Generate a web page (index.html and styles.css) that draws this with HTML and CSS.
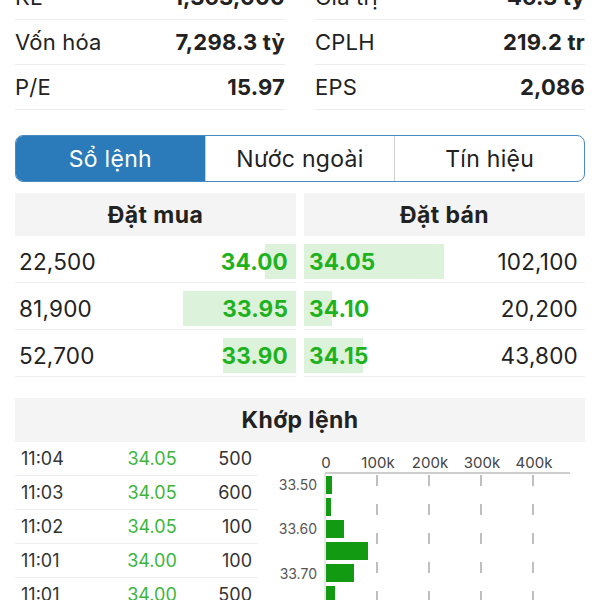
FILE: index.html
```html
<!DOCTYPE html>
<html lang="vi">
<head>
  <meta charset="UTF-8">
  <title>Sổ lệnh</title>
  <link rel="stylesheet" href="styles.css">
</head>
<body>
  <div class="page">
    <div class="stats">
      <div class="stat"><span>KL</span><b>1,363,000</b></div>
      <div class="stat"><span>Giá trị</span><b>46.3 tỷ</b></div>
      <div class="stat"><span>Vốn hóa</span><b>7,298.3 tỷ</b></div>
      <div class="stat"><span>CPLH</span><b>219.2 tr</b></div>
      <div class="stat"><span>P/E</span><b>15.97</b></div>
      <div class="stat"><span>EPS</span><b>2,086</b></div>
    </div>

    <div class="tabs">
      <div class="tab active">Sổ lệnh</div>
      <div class="tab">Nước ngoài</div>
      <div class="tab">Tín hiệu</div>
    </div>

    <div class="book">
      <div class="side buy">
        <div class="side-head">Đặt mua</div>
        <div class="level"><div class="level-bar" style="background-size:31px 100%"><span class="vol">22,500</span><span class="price">34.00</span></div></div>
        <div class="level"><div class="level-bar" style="background-size:113px 100%"><span class="vol">81,900</span><span class="price">33.95</span></div></div>
        <div class="level"><div class="level-bar" style="background-size:73px 100%"><span class="vol">52,700</span><span class="price">33.90</span></div></div>
      </div>
      <div class="side sell">
        <div class="side-head">Đặt bán</div>
        <div class="level"><div class="level-bar" style="background-size:140px 100%"><span class="price">34.05</span><span class="vol">102,100</span></div></div>
        <div class="level"><div class="level-bar" style="background-size:28px 100%"><span class="price">34.10</span><span class="vol">20,200</span></div></div>
        <div class="level"><div class="level-bar" style="background-size:59px 100%"><span class="price">34.15</span><span class="vol">43,800</span></div></div>
      </div>
    </div>

    <div class="match">
      <div class="match-head">Khớp lệnh</div>
      <div class="match-body">
        <div class="trades">
          <div class="trade"><span>11:04</span><span class="t-price">34.05</span><span class="t-vol">500</span></div>
          <div class="trade"><span>11:03</span><span class="t-price">34.05</span><span class="t-vol">600</span></div>
          <div class="trade"><span>11:02</span><span class="t-price">34.05</span><span class="t-vol">100</span></div>
          <div class="trade"><span>11:01</span><span class="t-price">34.00</span><span class="t-vol">100</span></div>
          <div class="trade"><span>11:01</span><span class="t-price">34.00</span><span class="t-vol">500</span></div>
        </div>
        <svg class="chart" width="327" height="170" viewBox="0 0 327 170">
          <g class="ticks">
            <text x="68" y="26">0</text>
            <text x="120" y="26">100k</text>
            <text x="172" y="26">200k</text>
            <text x="224" y="26">300k</text>
            <text x="276" y="26">400k</text>
          </g>
          <line x1="67" y1="31" x2="312" y2="31" stroke="#bdbdbd" stroke-width="1.5"/>
          <line x1="67" y1="31" x2="67" y2="170" stroke="#d0d0d0" stroke-width="1"/>
          <g stroke="#ababab" stroke-width="1.5" stroke-dasharray="11 18">
            <line x1="119" y1="33" x2="119" y2="170"/>
            <line x1="171" y1="33" x2="171" y2="170"/>
            <line x1="223" y1="33" x2="223" y2="170"/>
            <line x1="275" y1="33" x2="275" y2="170"/>
          </g>
          <g fill="#139a13">
            <rect x="68" y="34" width="6" height="18"/>
            <rect x="68" y="56" width="5" height="18"/>
            <rect x="68" y="78" width="18" height="18"/>
            <rect x="68" y="100" width="42" height="18"/>
            <rect x="68" y="122" width="28" height="18"/>
            <rect x="68" y="144" width="9" height="18"/>
          </g>
          <g class="prices">
            <text x="59" y="48">33.50</text>
            <text x="59" y="92">33.60</text>
            <text x="59" y="137">33.70</text>
          </g>
        </svg>
      </div>
    </div>
  </div>
</body>
</html>
```

FILE: styles.css
```css
body{
  margin:0;
  background:#fff;
  font-family: Inter, "Noto Sans", sans-serif;
  color:#222;
  overflow:hidden;
}
.page{
  padding:0 15px;
}

/* top stats */
.stats{
  display:grid;
  grid-template-columns:1fr 1fr;
  column-gap:30px;
  margin-top:-25px;
}
.stat{
  display:flex;
  justify-content:space-between;
  align-items:center;
  height:44px;
  border-bottom:1px solid #ededed;
  font-size:22px;
  letter-spacing:0.2px;
}
.stat b{
  font-weight:700;
}

/* segmented tabs */
.tabs{
  display:flex;
  margin-top:25px;
  height:47px;
  border:1px solid #4a8bc2;
  border-radius:8px;
  overflow:hidden;
  box-sizing:border-box;
}
.tab{
  flex:1;
  display:flex;
  align-items:center;
  justify-content:center;
  font-size:23px;
  letter-spacing:0.3px;
  color:#222;
  border-left:1px solid #cfcfcf;
}
.tab:first-child{
  border-left:none;
}
.tab.active{
  background:#2b7bba;
  color:#fff;
}

/* order book */
.book{
  display:flex;
  gap:8px;
  margin-top:11px;
}
.side{
  flex:1;
}
.side-head{
  height:43px;
  display:flex;
  align-items:center;
  justify-content:center;
  background:#f4f4f4;
  font-size:23px;
  font-weight:700;
  letter-spacing:0.4px;
}
.level{
  padding:8px 0 3px;
  border-bottom:1px solid #efefef;
}
.level-bar{
  display:flex;
  justify-content:space-between;
  align-items:center;
  height:35px;
  font-size:22.5px;
  letter-spacing:0.2px;
  background-image:linear-gradient(#dcf2da,#dcf2da);
  background-repeat:no-repeat;
}
.buy .level-bar{
  background-position:right top;
  padding:0 8px 0 4px;
}
.sell .level-bar{
  background-position:left top;
  padding:0 7px 0 5px;
}
.level .price{
  color:#1fb21f;
  font-weight:700;
}

/* matched trades */
.match{
  margin-top:21px;
}
.match-head{
  height:44px;
  display:flex;
  align-items:center;
  justify-content:center;
  background:#f4f4f4;
  font-size:23px;
  font-weight:700;
  letter-spacing:0.4px;
}
.match-body{
  display:flex;
}
.trades{
  width:243px;
  flex:none;
}
.trade{
  display:grid;
  grid-template-columns:91px 80px 1fr;
  align-items:center;
  height:33px;
  padding:0 6px;
  border-bottom:1px solid #efefef;
  font-size:18px;
  color:#333;
}
.t-price{
  text-align:center;
  color:#3cb53c;
}
.t-vol{
  text-align:right;
}
.chart{
  display:block;
  flex:none;
}
.chart .ticks text{
  font-size:15px;
  fill:#444;
  text-anchor:middle;
}
.chart .prices text{
  font-size:14px;
  fill:#555;
  text-anchor:end;
}
```
